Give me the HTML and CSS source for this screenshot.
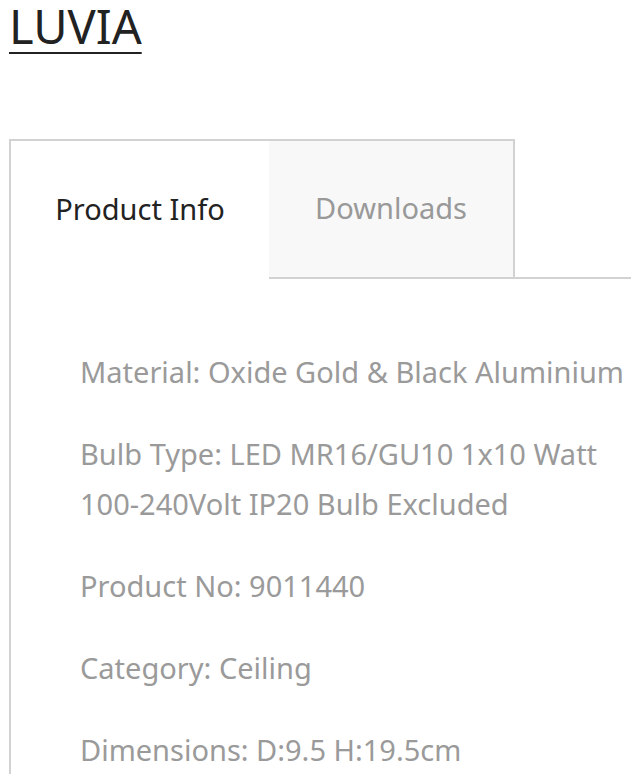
FILE: index.html
```
<!DOCTYPE html>
<html lang="en">
<head>
  <meta charset="UTF-8">
  <title>LUVIA</title>
  <link rel="stylesheet" href="styles.css">
</head>
<body>

  <h1 class="product-title"><a href="#">LUVIA</a></h1>

  <div class="tabs">
    <div class="tab-nav">
      <div class="tab active">Product Info</div>
      <div class="tab">Downloads</div>
      <div class="tab-fill"></div>
    </div>

    <div class="tab-content">
      <p>Material: Oxide Gold &amp; Black Aluminium</p>
      <p>Bulb Type: LED MR16/GU10 1x10 Watt 100-240Volt IP20 Bulb Excluded</p>
      <p>Product No: 9011440</p>
      <p>Category: Ceiling</p>
      <p>Dimensions: D:9.5 H:19.5cm</p>
    </div>
  </div>

</body>
</html>
```
FILE: styles.css
```
* {
  box-sizing: border-box;
}

body {
  margin: 0;
  padding-left: 9px;
  font-family: "Noto Sans", "Open Sans", sans-serif;
  background: #fff;
  overflow: hidden;
}

.product-title {
  margin: 0 0 87px;
  font-size: 47px;
  font-weight: 400;
  line-height: 52px;
}

.product-title a {
  color: #222;
  text-decoration: underline;
  text-decoration-thickness: 2px;
  text-underline-offset: 8px;
}

.tab-nav {
  display: flex;
  height: 140px;
}

.tab {
  display: flex;
  align-items: center;
  justify-content: center;
  padding-bottom: 3px;
  font-size: 29px;
  color: #999;
  background: #f8f8f8;
  border: 2px solid #d2d2d2;
  border-left: none;
  width: 246px;
}

.tab.active {
  width: 260px;
  color: #222;
  background: #fff;
  border-left: 2px solid #d2d2d2;
  border-bottom: none;
  border-right: none;
}

.tab-fill {
  flex: 1;
  border-bottom: 2px solid #d2d2d2;
}

.tab-content {
  border-left: 2px solid #d2d2d2;
  padding: 68px 0 0 69px;
}

.tab-content p {
  margin: 0 0 32px;
  font-size: 29px;
  line-height: 50px;
  color: #9a9a9a;
}

.tab-content p:last-child {
  margin-bottom: 0;
}
```
